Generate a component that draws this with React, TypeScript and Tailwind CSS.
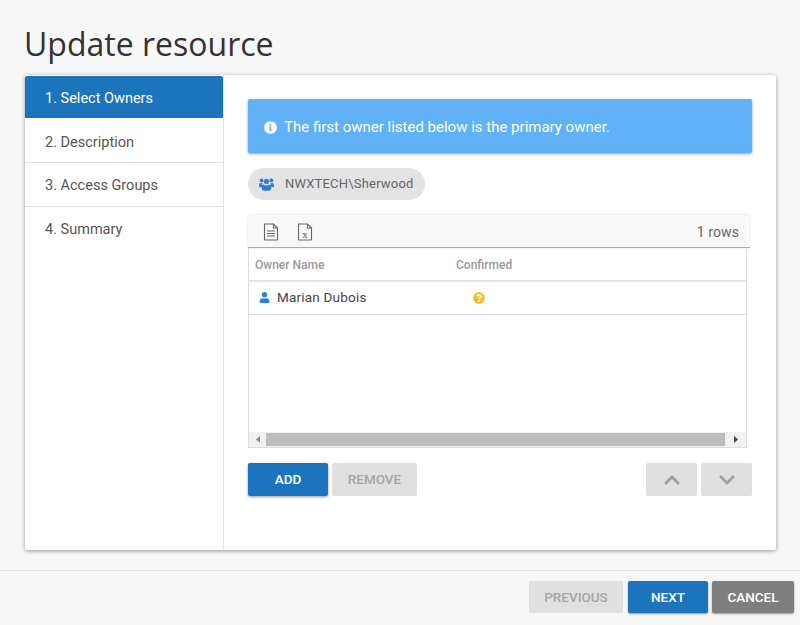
import { FaInfoCircle, FaUser, FaQuestionCircle, FaChevronUp, FaChevronDown } from "react-icons/fa";

function DocIcon({ x }: { x?: boolean }) {
  return (
    <svg width="16" height="18" viewBox="0 0 16 18" fill="none" stroke="#666" strokeWidth="1.1">
      <path d="M1.5 1h9l4 4v11.5a.5.5 0 0 1-.5.5H2a.5.5 0 0 1-.5-.5z" />
      <path d="M10.5 1v4h4" />
      {x ? (
        <text x="8" y="14.5" textAnchor="middle" fontSize="11" fontFamily="Liberation Serif, serif" fill="#555" stroke="none">x</text>
      ) : (
        <path d="M4 8h8M4 10.5h8M4 13h8" />
      )}
    </svg>
  );
}

function UsersIcon() {
  return (
    <svg width="15" height="13" viewBox="0 0 15 13" fill="#2a7fd5" className="mr-[11px] shrink-0">
      <circle cx="7.5" cy="3.4" r="2.6" />
      <circle cx="2.6" cy="2.4" r="1.9" />
      <circle cx="12.4" cy="2.4" r="1.9" />
      <path d="M0 8.2C0 5.8.8 4.8 2 4.8c.6 0 1 .2 1.5.5-.3.9-.4 2-.2 3.4-.9.2-1.6.4-2 .6C.4 9.2 0 8.9 0 8.2z" />
      <path d="M15 8.2c0-2.4-.8-3.4-2-3.4-.6 0-1 .2-1.5.5.3.9.4 2 .2 3.4.9.2 1.6.4 2 .6.9-.1 1.3-.4 1.3-1.1z" />
      <path d="M4.2 6.4c.9.7 2 1.1 3.3 1.1s2.4-.4 3.3-1.1c1 .2 1.5 1.4 1.5 3.4 0 1.9-.9 3-2.3 3H5c-1.4 0-2.3-1.1-2.3-3 0-2 .5-3.2 1.5-3.4z" />
    </svg>
  );
}

const steps = ["2. Description", "3. Access Groups", "4. Summary"];

export default function App() {
  return (
    <div className="w-[800px] h-[625px] bg-[#f7f7f7] flex flex-col overflow-hidden font-['Roboto',sans-serif]">
      <h1 className="h-[75px] pl-6 pt-[21px] text-[32px] leading-[45px] text-[#333] font-['Open_Sans',sans-serif]">
        Update resource
      </h1>
      <div className="ml-[25px] mr-6 h-[475px] bg-white rounded-[2px] shadow-[0_1px_4px_rgba(0,0,0,0.4)] flex">
        <nav className="w-[199px] shrink-0 border-r border-[#e2e2e2] pt-px text-[14.5px] text-[#555]">
          <div className="h-[42px] flex items-center pl-5 pt-[3px] bg-[#1b74bc] text-white rounded-t-[2px]">1. Select Owners</div>
          <div className="h-[45px] flex items-center pl-5 pt-[5px] border-b border-[#e2e2e2]">{steps[0]}</div>
          <div className="h-[44px] flex items-center pl-5 pt-[3px] border-b border-[#e2e2e2]">{steps[1]}</div>
          <div className="h-[44px] flex items-center pl-5 pt-[2px]">{steps[2]}</div>
        </nav>
        <div className="flex-1 pt-6 pl-6 pr-6 flex flex-col items-start">
          <div className="w-[504px] h-[54px] bg-[#60b1f6] rounded-[2px] shadow-[0_1px_3px_rgba(0,0,0,0.4)] flex items-center pl-4 pt-[2px] text-white text-[15px]">
            <FaInfoCircle className="text-[13px] mr-[7px]" />
            The first owner listed below is the primary owner.
          </div>
          <div className="mt-[15px] h-8 w-[177px] rounded-full bg-[#e3e3e3] flex items-center pl-[11px] text-[13px] text-[#666] tracking-[0.2px]">
            <UsersIcon />
            NWXTECH\Sherwood
          </div>
          <div className="mt-[15px] w-[502px] h-[33px] bg-[#f8f8f8] border-b border-[#aaa] rounded-t-[2px] shadow-[0_0_2px_rgba(0,0,0,0.2)] flex items-center pl-[15px] pr-[11px] pt-[2px]">
            <span className="mr-[18px] flex"><DocIcon /></span>
            <DocIcon x />
            <span className="ml-auto text-[14px] text-[#666] tracking-[0.1px]">1 rows</span>
          </div>
          <div className="w-[499px] h-[200px] border-x border-b border-[#ddd] flex flex-col">
            <div className="h-[34px] border-b-2 border-[#e3e3e3] flex items-center pl-[6px] pt-[2px] text-[12px] font-medium text-[#999] shrink-0">
              <span className="w-[201px]">Owner Name</span>
              <span>Confirmed</span>
            </div>
            <div className="h-[33px] border-b border-[#ddd] flex items-center pl-[10px] pb-px text-[13.5px] text-[#444] shrink-0 tracking-[0.2px]">
              <FaUser className="text-[11px] text-[#2a7fd5] mr-[7px]" />
              <span className="w-[197px]">Marian Dubois</span>
              <FaQuestionCircle className="ml-[-1px] text-[12px] text-[#f5b921]" />
            </div>
            <div className="flex-1" />
            <div className="h-[15px] bg-[#f1f1f1] flex items-center shrink-0">
              <span className="w-[17px] flex justify-center">
                <svg width="4" height="7" viewBox="0 0 4 7"><path d="M4 0v7L0 3.5z" fill="#888" /></svg>
              </span>
              <div className="w-[459px] h-[13px] bg-[#bdbdbd]" />
              <span className="flex-1 flex justify-center">
                <svg width="4" height="7" viewBox="0 0 4 7"><path d="M0 0v7l4-3.5z" fill="#444" /></svg>
              </span>
            </div>
          </div>
          <div className="mt-[15px] w-[504px] h-[33px] flex text-[13.5px] font-medium">
            <button className="w-20 bg-[#1b74bc] text-white rounded-[2px] shadow-[0_1px_3px_rgba(0,0,0,0.4)]">ADD</button>
            <button className="ml-1 w-[85px] bg-[#e0e0e0] text-[#a5a5a5] rounded-[2px]">REMOVE</button>
            <button className="ml-auto w-[51px] bg-[#e0e0e0] text-[#a0a0a0] rounded-[2px] flex items-center justify-center"><FaChevronUp className="text-[18px]" /></button>
            <button className="ml-1 w-[51px] bg-[#e0e0e0] text-[#a0a0a0] rounded-[2px] flex items-center justify-center"><FaChevronDown className="text-[18px]" /></button>
          </div>
        </div>
      </div>
      <div className="mt-5 border-t border-[#e3e3e3] flex justify-end pt-[10px] pr-[6px] text-[13.5px] font-medium">
        <button className="w-[94px] h-8 bg-[#e0e0e0] text-[#a5a5a5] rounded-[1px]">PREVIOUS</button>
        <button className="ml-[5px] w-20 h-8 bg-[#1b74bc] text-white rounded-[2px] shadow-[0_1px_2px_rgba(0,0,0,0.4)]">NEXT</button>
        <button className="ml-1 w-[82px] h-8 bg-[#7f7f7f] text-white rounded-[2px] shadow-[0_1px_2px_rgba(0,0,0,0.4)]">CANCEL</button>
      </div>
    </div>
  );
}
